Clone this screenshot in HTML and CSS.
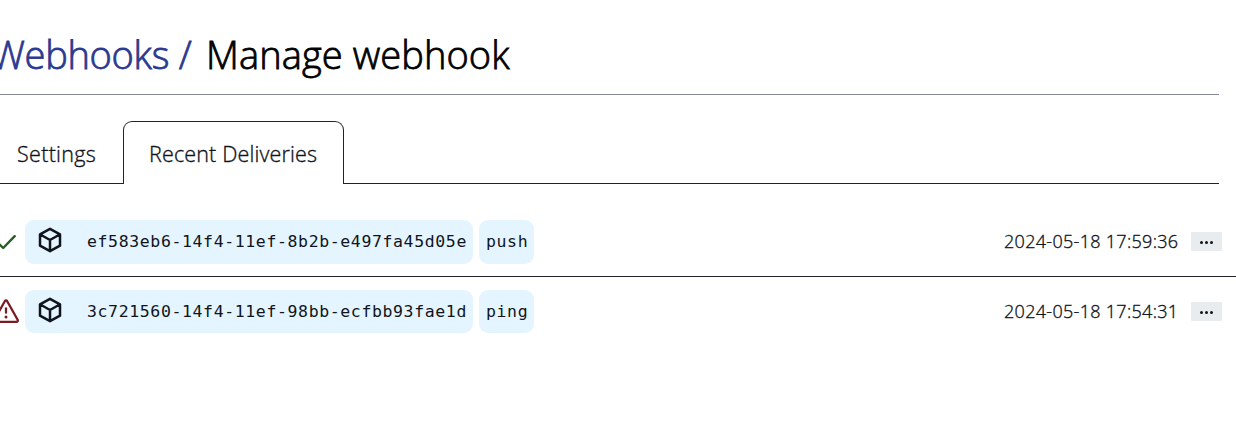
FILE: index.html
```
<!DOCTYPE html>
<html lang="en">
<head>
<meta charset="utf-8">
<title>Manage webhook</title>
<link rel="stylesheet" href="styles.css">
</head>
<body>
<svg class="symbols" aria-hidden="true">
  <symbol id="cube" viewBox="0 0 24 26"><path d="M12 1.8 22 7.3V18.7L12 24.2 2 18.7V7.3ZM2.3 7.5 12 13 21.7 7.5M12 13V24" fill="none" stroke="currentColor" stroke-width="2.5" stroke-linejoin="round"/></symbol>
</svg>
<main class="page">
  <h1 class="title"><a class="crumb" href="#">Webhooks /</a><span class="current">Manage webhook</span></h1>
  <nav class="tabs">
    <a class="tab settings" href="#"><span class="settings-label">Settings</span></a>
    <a class="tab active" href="#"><span class="active-label">Recent Deliveries</span></a>
    <span class="rest"></span>
  </nav>
  <ul class="deliveries">
    <li class="delivery">
      <span class="status ok"><svg width="20" height="24" viewBox="0 0 20 24"><path d="M1 13 6.2 18 17.7 6.2" fill="none" stroke="currentColor" stroke-width="2.4" stroke-linecap="round" stroke-linejoin="round"/></svg></span>
      <a class="chip id" href="#"><svg class="cube" width="24" height="26"><use href="#cube"/></svg><code class="uuid">ef583eb6-14f4-11ef-8b2b-e497fa45d05e</code></a>
      <code class="chip event">push</code>
      <time class="time">2024-05-18 17:59:36</time>
      <button class="more" aria-label="Details"><i class="dot"></i><i class="dot"></i><i class="dot"></i></button>
    </li>
    <li class="delivery second">
      <span class="status fail"><svg width="28" height="26" viewBox="0 0 28 26"><path d="M12.8 2.2Q14 .4 15.2 2.2L25.5 20.5Q26.5 22.8 24.3 22.8H3.7Q1.5 22.8 2.5 20.5Z" fill="none" stroke="currentColor" stroke-width="2.3" stroke-linejoin="round"/><path d="M14 9.3V13.7" stroke="currentColor" stroke-width="2.2" stroke-linecap="round"/><circle cx="14" cy="18" r="1.5" fill="currentColor"/></svg></span>
      <a class="chip id" href="#"><svg class="cube" width="24" height="26"><use href="#cube"/></svg><code class="uuid">3c721560-14f4-11ef-98bb-ecfbb93fae1d</code></a>
      <code class="chip event">ping</code>
      <time class="time">2024-05-18 17:54:31</time>
      <button class="more" aria-label="Details"><i class="dot"></i><i class="dot"></i><i class="dot"></i></button>
    </li>
  </ul>
</main>
</body>
</html>
```
FILE: styles.css
```
* { box-sizing: border-box; }
body { margin: 0; background: #fff; color: #10141c; font-family: "Open Sans", "Noto Sans", sans-serif; font-weight: 300; overflow: hidden; }
a { color: inherit; text-decoration: none; }
.symbols { display: none; }
.page { width: 1236px; height: 439px; overflow: hidden; }
.title { display: flex; align-items: center; width: 1219px; height: 95px; margin: 0; padding-top: 14px; border-bottom: 1px solid #858a99; font-size: 38px; font-weight: 300; line-height: 50px; white-space: nowrap; -webkit-text-stroke: .8px currentColor; }
.crumb { width: 215px; margin-left: -9px; letter-spacing: -.3px; color: #2b3990; }
.current { color: #000; letter-spacing: .1px; }
.tabs { display: flex; width: 1219px; height: 63px; margin-top: 26px; font-size: 21.5px; line-height: 30px; letter-spacing: .15px; white-space: nowrap; -webkit-text-stroke: .35px currentColor; }
.tab { padding-top: 18px; }
.settings { width: 123px; padding-left: 17px; border-bottom: 1px solid #22222c; }
.settings-label { letter-spacing: .3px; }
.active { width: 221px; padding: 17px 0 0 25px; border: 1px solid #22222c; border-bottom: 0; border-radius: 9px 9px 0 0; }
.rest { flex: 1; border-bottom: 1px solid #22222c; }
.deliveries { margin: 0; padding: 0; list-style: none; }
.delivery { display: flex; align-items: center; height: 93px; padding: 23px 14px 0 0; border-bottom: 1px solid #22222c; }
.delivery.second { height: 69px; padding-top: 0; border: 0; }
.status { display: flex; flex: none; width: 25px; }
.status svg { flex: none; }
.ok { color: #285c25; }
.ok svg { margin-left: -3px; }
.fail { color: #7c1a22; }
.fail svg { margin-left: -8px; }
.chip { display: flex; flex: none; align-items: center; height: 44px; border-radius: 9px; background: #e4f5ff; font-family: "DejaVu Sans Mono", monospace; font-size: 16.5px; letter-spacing: .62px; white-space: pre; }
.second .chip { height: 43px; }
.id { width: 448px; padding-left: 13px; }
.cube { flex: none; margin: -4px 25px 0 0; }
.uuid { font: inherit; }
.event { width: 55px; margin-left: 6px; padding-left: 7px; }
.time { width: 187px; margin-left: auto; padding-bottom: 2px; font-size: 18px; letter-spacing: .3px; white-space: nowrap; -webkit-text-stroke: .35px currentColor; }
.more { display: flex; align-items: center; justify-content: center; gap: 2px; width: 31px; height: 19px; padding: 2px 0 0; border: 0; border-radius: 1px; background: #e8ecef; }
.dot { width: 3px; height: 3px; border-radius: 50%; background: #10141c; }
```
